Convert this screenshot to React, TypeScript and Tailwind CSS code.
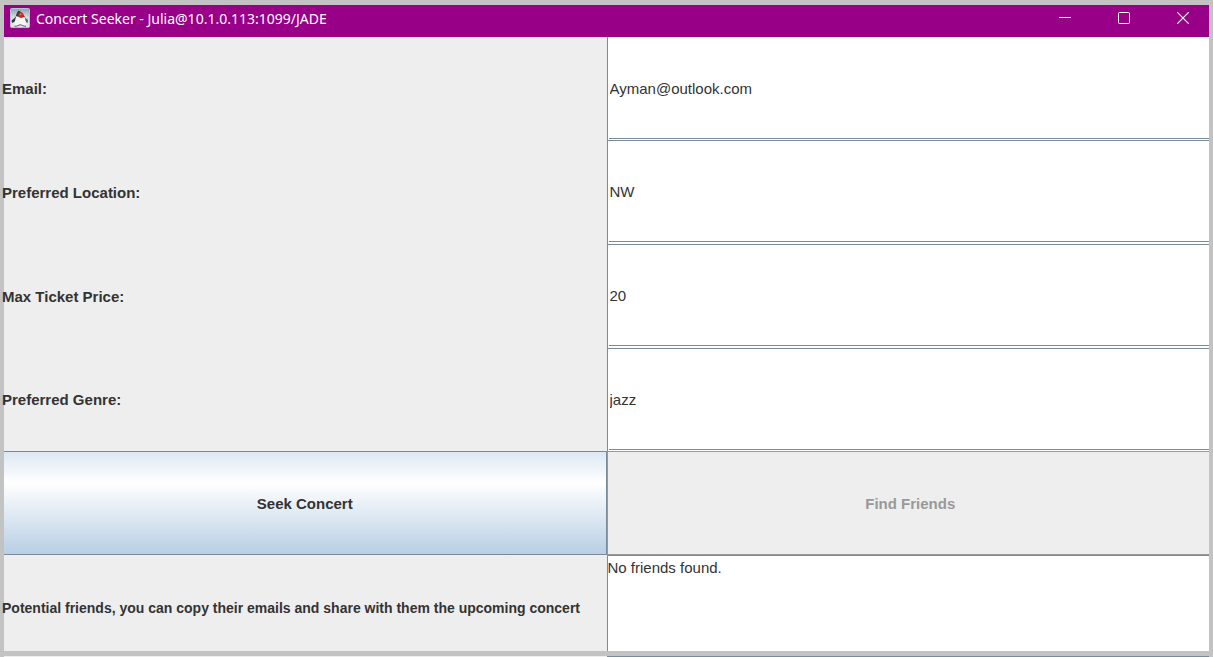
import { useState } from "react";

type Field = { id: string; label: string; value: string; edges: string };

const fields: Field[] = [
  { id: "email", label: "Email:", value: "Ayman@outlook.com", edges: "pb-px" },
  { id: "location", label: "Preferred Location:", value: "NW", edges: "border-t pb-0.5" },
  { id: "price", label: "Max Ticket Price:", value: "20", edges: "border-t pb-0.5" },
  { id: "genre", label: "Preferred Genre:", value: "jazz", edges: "border-t pb-px" },
];

function DukeIcon() {
  return (
    <svg width="20" height="20" viewBox="0 0 20 20" aria-hidden="true">
      <defs>
        <linearGradient id="tile" x1="0" y1="0" x2="0" y2="1">
          <stop offset="0" stopColor="#8fa1b3" />
          <stop offset="0.45" stopColor="#d3dbe3" />
          <stop offset="1" stopColor="#e3e8ec" />
        </linearGradient>
      </defs>
      <rect x="0.5" y="0.5" width="19" height="19" rx="1" fill="url(#tile)" stroke="#b4c2d0" />
      <path d="M8 3C9.500 2 11 4 12.500 5.500L15 9L15.500 12L5.500 11.500C5.500 8 6.500 5 8 3Z" fill="#3b3f43" />
      <path d="M6.500 8.500L1.500 12.500L2 15L6 13Z" fill="#34383c" />
      <path d="M14 9L18 12L17.500 15L14 13Z" fill="#595e64" />
      <path d="M6.500 8C8 8.500 9.500 9.800 11 9.800C12.500 9.800 13.500 9 14.500 9C15.500 12 16.500 15 16 18C13.500 18.500 12 16.500 10.500 16.500C8.500 16.500 7 18.800 4.500 18C4.500 15 5 11 6.500 8Z" fill="#f6f7f5" />
      <path d="M4.500 18.200C7 18.700 8.500 16.800 10.500 16.800C12 16.800 13 18.500 16 18.200" fill="none" stroke="#55595e" />
      <ellipse cx="11" cy="7" rx="2.600" ry="2.500" fill="#dc2b1c" />
      <circle cx="10.500" cy="6.300" r="0.800" fill="#ff8466" />
    </svg>
  );
}

function TitleBar() {
  return (
    <header className="flex h-8 shrink-0 items-center bg-[#990088] pl-1.5 text-white">
      <div className="flex flex-1 items-center gap-1.5 pb-1.5">
        <DukeIcon />
        <h1 className="pt-px font-['Noto_Sans','Open_Sans',sans-serif] text-[14px] leading-5">
          Concert Seeker - Julia@10.1.0.113:1099/JADE
        </h1>
      </div>
      <div className="flex h-full gap-[13px] pr-[3px] pb-1.5">
        <button type="button" aria-label="Minimize" className="flex w-[46px] items-center justify-center">
          <svg width="12" height="12" viewBox="0 0 12 12" fill="none" stroke="currentColor">
            <path d="M0 5.500H12" />
          </svg>
        </button>
        <button type="button" aria-label="Maximize" className="flex w-[46px] items-center justify-center">
          <svg width="12" height="12" viewBox="0 0 12 12" fill="none" stroke="currentColor">
            <rect x="0.5" y="0.5" width="11" height="11" rx="1" />
          </svg>
        </button>
        <button type="button" aria-label="Close" className="flex w-[46px] items-center justify-center">
          <svg width="12" height="12" viewBox="0 0 12 12" fill="none" stroke="currentColor" strokeWidth="1.200">
            <path d="M0.300 0.300L11.700 11.700M11.700 0.300L0.300 11.700" />
          </svg>
        </button>
      </div>
    </header>
  );
}

function FieldRow({ field }: { field: Field }) {
  const [value, setValue] = useState(field.value);
  return (
    <>
      <label htmlFor={field.id} className="flex items-center pt-px font-bold">
        <span className="-ml-0.5 whitespace-nowrap">{field.label}</span>
      </label>
      <div className={`flex border-l border-[#7a8a99] bg-white pl-px ${field.edges}`}>
        <input
          id={field.id}
          type="text"
          value={value}
          onChange={(e) => setValue(e.target.value)}
          className="w-full min-w-0 border-b border-[#7a8a99] bg-white pt-0.5 pl-px outline-none"
        />
      </div>
    </>
  );
}

export default function App() {
  return (
    <div className="flex min-h-screen flex-col bg-[#c3c3c3] px-1 pt-[5px] font-['Liberation_Sans',Arial,sans-serif] text-[15px] leading-5 text-[#333333]">
      <TitleBar />
      <main className="grid flex-1 grid-cols-2 grid-rows-[103px_104px_104px_103px_104px_1fr] bg-[#eeeeee]">
        {fields.map((field) => (
          <FieldRow key={field.id} field={field} />
        ))}
        <button
          type="button"
          className="border-y border-r border-[#7a8a99] bg-linear-to-b from-[#dde8f3] via-white via-30% to-[#b8cfe5] pt-0.5 font-bold"
        >
          Seek Concert
        </button>
        <button
          type="button"
          disabled
          className="border-y border-l border-[#999999] bg-[#eeeeee] pt-0.5 pl-1 font-bold text-[#999999]"
        >
          Find Friends
        </button>
        <label htmlFor="friends" className="flex items-center pt-2.5 text-[14px] font-bold">
          <span className="-ml-0.5 whitespace-nowrap">
            Potential friends, you can copy their emails and share with them the upcoming concert
          </span>
        </label>
        <textarea
          id="friends"
          defaultValue="No friends found."
          className="block h-full w-full resize-none border-t border-l border-[#7a8a99] bg-white pt-0.5 outline-none"
        />
      </main>
      <footer className="mt-[5px] grid h-px grid-cols-2">
        <div className="bg-[#eeeeee]" />
        <div className="bg-[#7a8a99]" />
      </footer>
    </div>
  );
}
